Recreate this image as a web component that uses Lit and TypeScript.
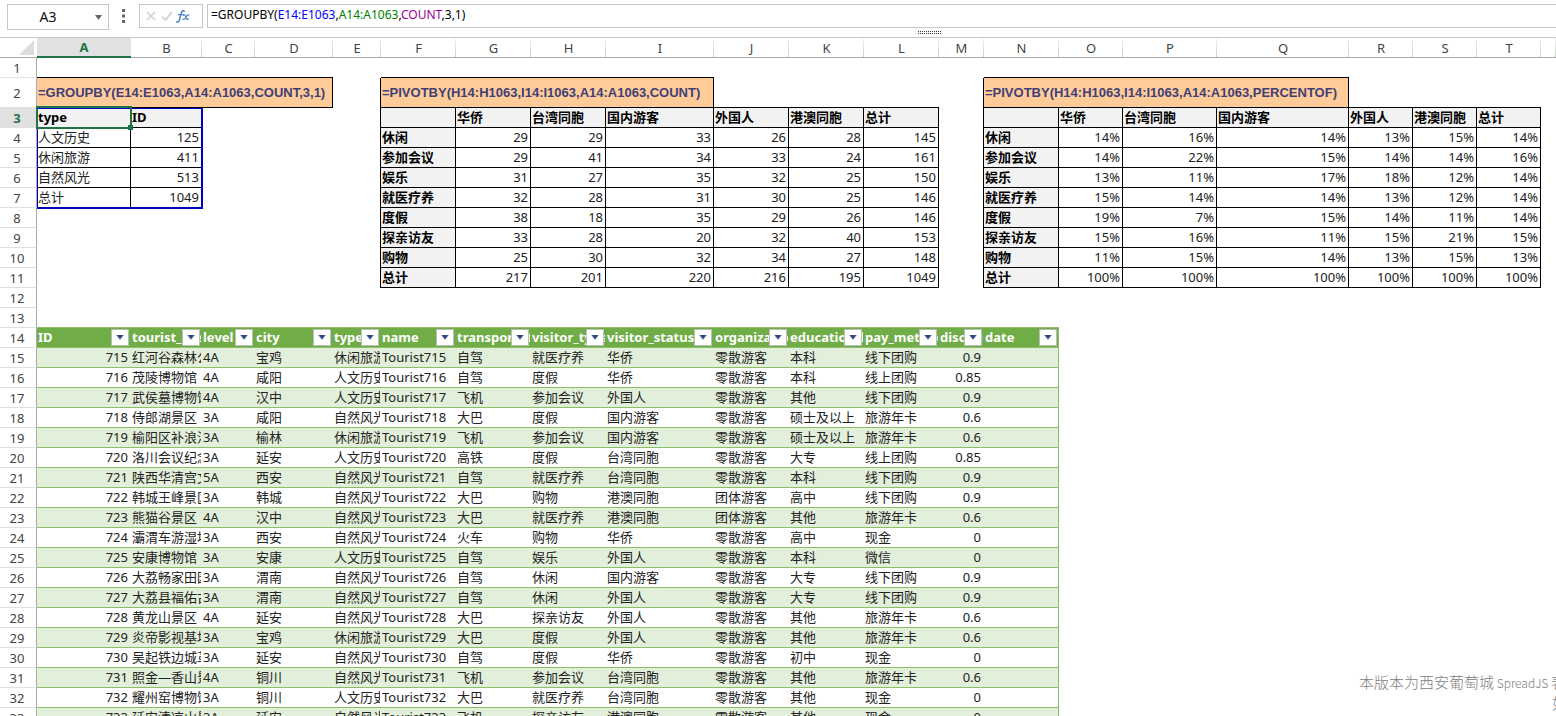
import { LitElement, html, css, svg, nothing } from "lit";
import { customElement } from "lit/decorators.js";
import { classMap } from "lit/directives/class-map.js";
import { styleMap } from "lit/directives/style-map.js";

interface Cell {
  text?: string;
  kind?: string;
  span?: number;
  filter?: boolean;
  right?: "dark" | "green";
  bottom?: "dark" | "green";
}

const COLUMNS: [string, number][] = [
  ["A", 94], ["B", 71], ["C", 53], ["D", 78], ["E", 48], ["F", 75], ["G", 75],
  ["H", 75], ["I", 108], ["J", 75], ["K", 75], ["L", 75], ["M", 45], ["N", 75],
  ["O", 64], ["P", 94], ["Q", 132], ["R", 64], ["S", 64], ["T", 64], ["U", 0],
];
const ROW_COUNT = 33;
const ROW_HEIGHT = 20;

const FORMULA = "=GROUPBY(E14:E1063,A14:A1063,COUNT,3,1)";

const GROUPED = [
  ["type", "ID"],
  ["人文历史", "125"],
  ["休闲旅游", "411"],
  ["自然风光", "513"],
  ["总计", "1049"],
];

const PIVOT_HEAD = ["", "华侨", "台湾同胞", "国内游客", "外国人", "港澳同胞", "总计"];
const PIVOT_KEYS = ["休闲", "参加会议", "娱乐", "就医疗养", "度假", "探亲访友", "购物", "总计"];
const COUNTS = [
  [29, 29, 33, 26, 28, 145],
  [29, 41, 34, 33, 24, 161],
  [31, 27, 35, 32, 25, 150],
  [32, 28, 31, 30, 25, 146],
  [38, 18, 35, 29, 26, 146],
  [33, 28, 20, 32, 40, 153],
  [25, 30, 32, 34, 27, 148],
  [217, 201, 220, 216, 195, 1049],
];
const PERCENTS = [
  [14, 16, 14, 13, 15, 14],
  [14, 22, 15, 14, 14, 16],
  [13, 11, 17, 18, 12, 14],
  [15, 14, 14, 13, 12, 14],
  [19, 7, 15, 14, 11, 14],
  [15, 16, 11, 15, 21, 15],
  [11, 15, 14, 13, 15, 13],
  [100, 100, 100, 100, 100, 100],
];

const FIELDS = [
  "ID", "tourist_area", "level", "city", "type", "name", "transportation",
  "visitor_type", "visitor_status", "organization", "education_level",
  "pay_method", "discount", "date",
];
const RECORDS = `
715|红河谷森林公园|4A|宝鸡|休闲旅游|Tourist715|自驾|就医疗养|华侨|零散游客|本科|线下团购|0.9
716|茂陵博物馆|4A|咸阳|人文历史|Tourist716|自驾|度假|华侨|零散游客|本科|线上团购|0.85
717|武侯墓博物馆|4A|汉中|人文历史|Tourist717|飞机|参加会议|外国人|零散游客|其他|线下团购|0.9
718|侍郎湖景区|3A|咸阳|自然风光|Tourist718|大巴|度假|国内游客|零散游客|硕士及以上|旅游年卡|0.6
719|榆阳区补浪河|3A|榆林|休闲旅游|Tourist719|飞机|参加会议|国内游客|零散游客|硕士及以上|旅游年卡|0.6
720|洛川会议纪念馆|3A|延安|人文历史|Tourist720|高铁|度假|台湾同胞|零散游客|大专|线上团购|0.85
721|陕西华清宫文化|5A|西安|自然风光|Tourist721|自驾|就医疗养|台湾同胞|零散游客|本科|线下团购|0.9
722|韩城王峰景区|3A|韩城|自然风光|Tourist722|大巴|购物|港澳同胞|团体游客|高中|线下团购|0.9
723|熊猫谷景区|4A|汉中|自然风光|Tourist723|大巴|就医疗养|港澳同胞|团体游客|其他|旅游年卡|0.6
724|灞渭车游湿地|3A|西安|自然风光|Tourist724|火车|购物|华侨|零散游客|高中|现金|0
725|安康博物馆|3A|安康|人文历史|Tourist725|自驾|娱乐|外国人|零散游客|本科|微信|0
726|大荔畅家田园|3A|渭南|自然风光|Tourist726|自驾|休闲|国内游客|零散游客|大专|线下团购|0.9
727|大荔县福佑古城|3A|渭南|自然风光|Tourist727|自驾|休闲|外国人|零散游客|大专|线下团购|0.9
728|黄龙山景区|4A|延安|自然风光|Tourist728|大巴|探亲访友|外国人|零散游客|其他|旅游年卡|0.6
729|炎帝影视基地|3A|宝鸡|休闲旅游|Tourist729|大巴|度假|外国人|零散游客|其他|旅游年卡|0.6
730|吴起铁边城革命|3A|延安|自然风光|Tourist730|自驾|度假|华侨|零散游客|初中|现金|0
731|照金—香山景区|4A|铜川|自然风光|Tourist731|飞机|参加会议|台湾同胞|零散游客|其他|旅游年卡|0.6
732|耀州窑博物馆|3A|铜川|人文历史|Tourist732|大巴|就医疗养|台湾同胞|零散游客|其他|现金|0
733|延安清凉山景区|3A|延安|自然风光|Tourist733|飞机|探亲访友|港澳同胞|零散游客|其他|现金|0
`.trim().split("\n").map((line) => line.split("|"));

/** Builds the grid; index 0 is row 1, index 0 of a row is column A. */
function buildGrid(): (Cell | null)[][] {
  const grid: (Cell | null)[][] = Array.from({ length: ROW_COUNT }, () =>
    COLUMNS.map(() => ({}) as Cell)
  );
  const put = (row: number, col: number, cell: Cell) => {
    grid[row - 1][col] = { ...grid[row - 1][col], ...cell };
  };

  const banner = (col: number, span: number, text: string) => {
    for (let i = 0; i < span; i++) put(1, col + i, { bottom: "dark" });
    put(2, col, { text, span, kind: "formula", right: "dark", bottom: "dark" });
    for (let i = 1; i < span; i++) grid[1][col + i] = null;
    if (col > 0) put(2, col - 1, { right: "dark" });
  };
  banner(0, 4, FORMULA);
  banner(5, 4, "=PIVOTBY(H14:H1063,I14:I1063,A14:A1063,COUNT)");
  banner(13, 4, "=PIVOTBY(H14:H1063,I14:I1063,A14:A1063,PERCENTOF)");

  GROUPED.forEach((line, r) =>
    line.forEach((text, c) =>
      put(3 + r, c, {
        text, right: "dark", bottom: "dark",
        kind: r === 0 ? "label" : c === 1 ? "number" : "",
      })
    )
  );

  const pivot = (col: number, values: number[][], unit: string) => {
    PIVOT_HEAD.forEach((text, c) => {
      if (c > 3) put(2, col + c, { bottom: "dark" });
      put(3, col + c, { text, kind: "label", right: "dark", bottom: "dark" });
    });
    values.forEach((line, r) => {
      put(4 + r, col, { text: PIVOT_KEYS[r], kind: "label", right: "dark", bottom: "dark" });
      line.forEach((value, c) =>
        put(4 + r, col + 1 + c, { text: `${value}${unit}`, kind: "number", right: "dark", bottom: "dark" })
      );
    });
    for (let r = 3; r <= 11; r++) put(r, col - 1, { right: "dark" });
  };
  pivot(5, COUNTS, "");
  pivot(13, PERCENTS, "%");

  FIELDS.forEach((text, c) => {
    const right = c === FIELDS.length - 1 ? ("green" as const) : undefined;
    put(13, c, { bottom: "green" });
    put(14, c, { text, kind: "field", filter: true, bottom: "green", right });
    RECORDS.forEach((record, r) =>
      put(15 + r, c, {
        text: record[c] ?? "",
        kind: "record" + (c === 0 || c === 12 ? " number" : "") + (r % 2 ? "" : " band"),
        bottom: "green", right,
      })
    );
  });
  return grid;
}

@customElement("formula-bar")
export class FormulaBar extends LitElement {
  static styles = css`
    :host { display: block; background: #fff; }
    .bar { display: flex; align-items: flex-start; padding: 4px 0 0 7px; height: 27px; }
    .name { display: flex; box-sizing: border-box; width: 102px; height: 26px; border: 1px solid #c6c6c6; align-items: center; }
    .name-input { flex: 1; min-width: 0; border: 0; padding: 0; outline: 0; background: none; text-align: center;
      font: 14px/22px "Noto Sans", sans-serif; color: #111; }
    .drop { border: 0; background: none; padding: 0; width: 20px; height: 24px; display: grid; place-items: center; }
    .grip { width: 28px; height: 24px; display: grid; place-items: center; margin-right: 2px; }
    .tools { display: flex; align-items: center; box-sizing: border-box; width: 64px; height: 24px; border: 1px solid #c6c6c6; padding-left: 3px; }
    .tool { border: 0; background: none; padding: 0; width: 16px; height: 20px; display: grid; place-items: center; }
    .tool.fx { width: 16px; }
    .text { flex: 1; box-sizing: border-box; height: 24px; margin-left: 4px; border: 1px solid #c6c6c6; border-right: 0;
      padding-left: 3px; font: 12px/20px "Noto Sans", sans-serif; color: #000; white-space: nowrap; overflow: hidden; outline: 0; }
    .first { color: #0000ff; }
    .second { color: #008000; }
    .third { color: #990099; }
    .resizer { height: 6px; display: flex; justify-content: center; padding-left: 302px; align-items: flex-start; }
  `;

  render() {
    return html`
      <div class="bar">
        <div class="name">
          <input class="name-input" aria-label="Name box" value="A3" />
          <button class="drop" aria-label="Names">
            <svg width="7" height="5" viewBox="0 0 7 5"><path d="M0 0h7L3.5 5z" fill="#666" /></svg>
          </button>
        </div>
        <div class="grip">
          <svg width="3" height="14" viewBox="0 0 3 14" fill="#666">
            <path d="M0 0h3v3H0zM0 5.500h3v3H0zM0 11h3v3H0z" />
          </svg>
        </div>
        <div class="tools">
          <button class="tool" aria-label="Cancel">
            <svg width="10" height="10" viewBox="0 0 10 10"><path d="M1 1l8 8M9 1l-8 8" stroke="#d0d0d0" stroke-width="1.500" /></svg>
          </button>
          <button class="tool" aria-label="Enter">
            <svg width="12" height="10" viewBox="0 0 12 10"><path d="M1 5.500l3.500 3.500L11 1" fill="none" stroke="#d0d0d0" stroke-width="1.700" /></svg>
          </button>
          <button class="tool fx" aria-label="Insert function">
            <svg width="14" height="13" viewBox="0 0 14 13" fill="none" stroke="#4a86c5" stroke-linecap="round">
              <path d="M8.300 1.300C7.400.3 6.100.7 5.600 2.300L3.300 10.300C2.900 11.800 1.900 12.500.7 11.800" stroke-width="1.500" />
              <path d="M2.500 4.600h4.700" stroke-width="1.200" />
              <path d="M7.600 5.300c1.200-1.100 1.700-.4 2.100 1.100l.5 1.900c.4 1.400 1.200 1.500 2.100.5M13 4.900c-1.200-.4-2 .6-2.900 2.100S8 9.800 6.900 9.200" stroke-width="1.200" />
            </svg>
          </button>
        </div>
        <div class="text" role="textbox" aria-label="Formula" contenteditable="true" spellcheck="false"
          >=GROUPBY(<span class="first">E14:E1063</span>,<span class="second">A14:A1063</span>,<span class="third">COUNT</span>,3,1)</div>
      </div>
      <div class="resizer">
        <svg width="23" height="3" viewBox="0 0 23 3">
          ${Array.from({ length: 12 }, (_, i) => svg`<path d=${`M${i * 2} 0h1v1h-1zM${i * 2} 2h1v1h-1z`} fill="#333" />`)}
        </svg>
      </div>
    `;
  }
}

@customElement("sheet-grid")
export class SheetGrid extends LitElement {
  static styles = css`
    :host { display: block; background: #fff; border-top: 1px solid #c6c6c6; overflow: hidden; }
    .sheet { table-layout: fixed; border-collapse: separate; border-spacing: 0; width: 100%;
      font: 13px/19px "Noto Sans", "Noto Sans CJK SC", sans-serif; color: #222; }
    .sheet td, .sheet th { box-sizing: border-box; height: 20px; padding: 0 1px; white-space: nowrap;
      border: 0 solid #000; text-align: left; vertical-align: top; }
    .value { display: block; overflow: hidden; }
    .sheet .col { padding: 1px 0 0; text-align: center; font-weight: 400; line-height: 18px; color: #444; border-bottom: 1px solid #ababab;
      background: linear-gradient(#f2f2f2, #c4d2c4) right / 1px 100% no-repeat; }
    .sheet .corner { padding: 0; border-bottom: 1px solid #ababab; }
    .corner svg { display: block; margin: 2px 0 0 19px; }
    .sheet .row { padding: 1px 2px 0 0; text-align: center; font-weight: 400; line-height: 18px; color: #444;
      border-right: 1px solid #ababab; border-bottom: 1px solid #e0e0e0; }
    .sheet .col.active { background: #e1e1e1; color: #217346; font-weight: 700; border-bottom: 2px solid #217346; line-height: 17px; }
    .sheet .row.active { background: #e1e1e1; color: #217346; font-weight: 700; }
    .sheet .tall td, .sheet .tall th { height: 30px; line-height: 29px; }
    .sheet .tall .row { line-height: 28px; }
    .sheet .dark-right { border-right: 1px solid #000; }
    .sheet .dark-bottom { border-bottom: 1px solid #000; }
    .sheet .green-right { border-right: 1px solid #8cbf68; }
    .sheet .green-bottom { border-bottom: 1px solid #8cbf68; }
    .sheet .number { text-align: right; }
    .number .value { padding-right: 1px; }
    .record.number .value { padding-right: 2px; }
    .sheet .label { background: #f2f2f2; font-weight: 700; color: #000; }
    .sheet .formula { background: #ffcc99; color: #3f3f76; font-family: "Liberation Sans", sans-serif; font-weight: 700; }
    .sheet .band { background: #e2efda; }
    .sheet .field { position: relative; background: #70ad47; color: #fff; font-weight: 700; }
    .filter { position: absolute; top: 1px; right: 2px; width: 18px; height: 17px; box-sizing: border-box; padding: 0;
      border: 1px solid #bdbdbd; background: #fff; display: grid; place-items: center; }
    .green-right .filter { right: 1px; }
    .sheet .anchor { position: relative; }
    .range { position: absolute; top: 0; left: 0; box-sizing: border-box; border: 2px solid #0000c0; border-left-width: 1px; border-top-width: 1px; pointer-events: none; }
    .cursor { position: absolute; inset: -2px -2px -2px -1px; border: 2px solid #217346; pointer-events: none; }
    .handle { position: absolute; right: -3px; bottom: -3px; width: 5px; height: 5px; background: #217346; }
  `;

  private grid = buildGrid();

  private cellTemplate(cell: Cell | null, row: number, col: number) {
    if (!cell) return nothing;
    const anchor = row === 3 && col === 0;
    const classes: Record<string, boolean> = { anchor };
    (cell.kind ?? "").split(" ").filter(Boolean).forEach((name) => (classes[name] = true));
    if (cell.right) classes[`${cell.right}-right`] = true;
    if (cell.bottom) classes[`${cell.bottom}-bottom`] = true;
    return html`<td class=${classMap(classes)} colspan=${cell.span ?? 1}>${cell.text
      ? html`<span class="value">${cell.text}</span>`
      : nothing}${cell.filter
      ? html`<button class="filter" aria-label="Filter ${cell.text}">
          <svg width="8" height="5" viewBox="0 0 8 5"><path d="M0 0h8L4 5z" fill="#8090c4" /><path d="M1 0h6L4 4z" fill="#33427f" /></svg>
        </button>`
      : nothing}${anchor ? this.selection() : nothing}</td>`;
  }

  private selection() {
    const size = {
      width: `${COLUMNS[0][1] + COLUMNS[1][1] + 1}px`,
      height: `${GROUPED.length * ROW_HEIGHT + 1}px`,
    };
    return html`<div class="range" style=${styleMap(size)}></div>
      <div class="cursor"><div class="handle"></div></div>`;
  }

  render() {
    return html`
      <table class="sheet">
        <colgroup>
          <col style="width:37px" />
          ${COLUMNS.map(([, width]) => html`<col style=${styleMap({ width: width ? `${width}px` : "auto" })} />`)}
        </colgroup>
        <thead>
          <tr>
            <th class="corner"><svg width="15" height="15" viewBox="0 0 15 15"><path d="M15 0v15H0z" fill="#dcdcdc" /></svg></th>
            ${COLUMNS.map(([name], i) => html`<th scope="col" class=${classMap({ col: true, active: i === 0 })}>${name === "U" ? "" : name}</th>`)}
          </tr>
        </thead>
        <tbody>
          ${this.grid.map((cells, r) => html`
            <tr class=${classMap({ tall: r === 1 })}>
              <th scope="row" class=${classMap({ row: true, active: r === 2 })}>${r + 1}</th>
              ${cells.map((cell, c) => this.cellTemplate(cell, r + 1, c))}
            </tr>`)}
        </tbody>
      </table>
    `;
  }
}

@customElement("app-root")
export class AppRoot extends LitElement {
  static styles = css`
    :host { display: flex; flex-direction: column; height: 100vh; overflow: hidden; position: relative; background: #fff; }
    .grid { flex: 1; min-height: 0; }
    .notice { position: absolute; right: 0; bottom: 0; width: 197px; height: 44px; overflow: hidden; white-space: nowrap;
      font: 300 15px/20px "Noto Sans CJK SC", sans-serif; color: #808080; pointer-events: none; }
    .product { font-size: 12px; }
    .line { margin: 0; }
    .more { padding-left: 193px; }
  `;

  render() {
    return html`
      <formula-bar></formula-bar>
      <sheet-grid class="grid"></sheet-grid>
      <div class="notice">
        <p class="line">本版本为西安葡萄城<span class="product"> SpreadJS </span>表</p>
        <p class="line more">如</p>
      </div>
    `;
  }
}
